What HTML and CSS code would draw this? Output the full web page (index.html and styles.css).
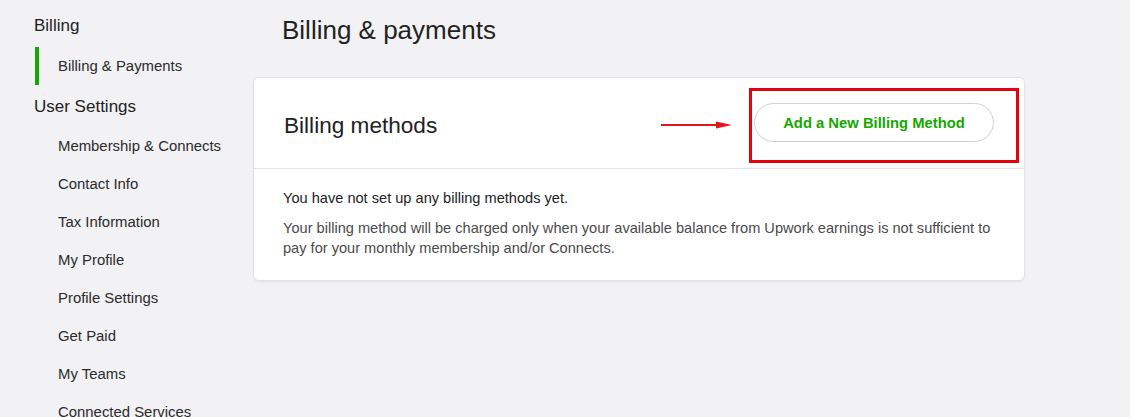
FILE: index.html
```html
<!DOCTYPE html>
<html lang="en">
<head>
<meta charset="utf-8">
<title>Billing & payments</title>
<link rel="stylesheet" href="styles.css">
</head>
<body>
<div class="page">
  <nav class="sidebar">
    <div class="group">
      <div class="group-title">Billing</div>
      <a class="nav-item active">Billing &amp; Payments</a>
    </div>
    <div class="group group-user">
      <div class="group-title">User Settings</div>
      <a class="nav-item">Membership &amp; Connects</a>
      <a class="nav-item">Contact Info</a>
      <a class="nav-item">Tax Information</a>
      <a class="nav-item">My Profile</a>
      <a class="nav-item">Profile Settings</a>
      <a class="nav-item">Get Paid</a>
      <a class="nav-item">My Teams</a>
      <a class="nav-item">Connected Services</a>
    </div>
  </nav>
  <main class="main">
    <h1 class="page-title">Billing &amp; payments</h1>
    <section class="card">
      <header class="card-header">
        <h2 class="card-title">Billing methods</h2>
        <div class="action">
          <svg class="arrow" width="72" height="10" viewBox="0 0 72 10">
            <path d="M0 5 H58" stroke="#e3141b" stroke-width="2.2"/>
            <path d="M55 1.5 L71 5 L55 8.5 Z" fill="#e3141b"/>
          </svg>
          <button class="btn-outline">Add a New Billing Method</button>
          <span class="highlight"></span>
        </div>
      </header>
      <div class="card-body">
        <p class="lead">You have not set up any billing methods yet.</p>
        <p class="note">Your billing method will be charged only when your available balance from Upwork earnings is not sufficient to pay for your monthly membership and/or Connects.</p>
      </div>
    </section>
  </main>
</div>
</body>
</html>
```
FILE: styles.css
```css
* { box-sizing: border-box; }
html, body { margin: 0; padding: 0; }
body {
  background: #f2f2f4;
  font-family: "Liberation Sans", Arial, sans-serif;
  color: #222;
  height: 417px;
  overflow: hidden;
}
.page {
  display: flex;
  align-items: flex-start;
}
.sidebar {
  width: 253px;
  flex: none;
  padding: 6px 0 0 34px;
  display: flex;
  flex-direction: column;
}
.group { display: flex; flex-direction: column; }
.group-user { padding-top: 2px; }
.group-title {
  height: 40px;
  line-height: 40px;
  font-size: 17px;
  color: #222;
  margin-bottom: 1px;
}
.group-user .group-title { margin-bottom: 0; }
.nav-item {
  display: block;
  height: 38px;
  line-height: 38px;
  font-size: 14.9px;
  color: #2b2b2b;
  border-left: 4px solid transparent;
  margin-left: 1px;
  padding-left: 19px;
  white-space: nowrap;
}
.nav-item.active { border-left-color: #14a800; }
.main {
  width: 772px;
  flex: none;
}
.page-title {
  margin: 0 0 17px;
  padding-left: 29px;
  height: 60px;
  line-height: 60px;
  font-size: 26px;
  font-weight: 400;
  color: #222;
}
.card {
  background: #fff;
  border: 1px solid #e2e3e5;
  border-radius: 6px;
  box-shadow: 0 1px 2px rgba(0,0,0,0.06);
}
.card-header {
  height: 91px;
  padding: 0 30px;
  display: flex;
  align-items: center;
  justify-content: space-between;
  border-bottom: 1px solid #e2e3e5;
}
.card-title {
  margin: 5px 0 0;
  font-size: 22.6px;
  font-weight: 400;
  color: #222;
}
.action { position: relative; margin-top: -1px; }
.btn-outline {
  display: block;
  width: 240px;
  height: 39px;
  border: 1px solid #d1d1d1;
  border-radius: 20px;
  background: #fff;
  color: #14a800;
  font-family: inherit;
  font-size: 14.8px;
  font-weight: 700;
}
.highlight {
  position: absolute;
  left: -5px;
  top: -15px;
  right: -25px;
  bottom: -21px;
  border: 3px solid #e3000f;
  pointer-events: none;
}
.arrow {
  position: absolute;
  left: -93px;
  top: 17px;
}
.card-body {
  padding: 19px 29px 22px;
}
.lead {
  margin: 0;
  font-size: 14.6px;
  line-height: 20px;
  color: #222;
}
.note {
  margin: 10px 0 0;
  font-size: 14.6px;
  line-height: 20px;
  color: #4a4a4a;
}
```
